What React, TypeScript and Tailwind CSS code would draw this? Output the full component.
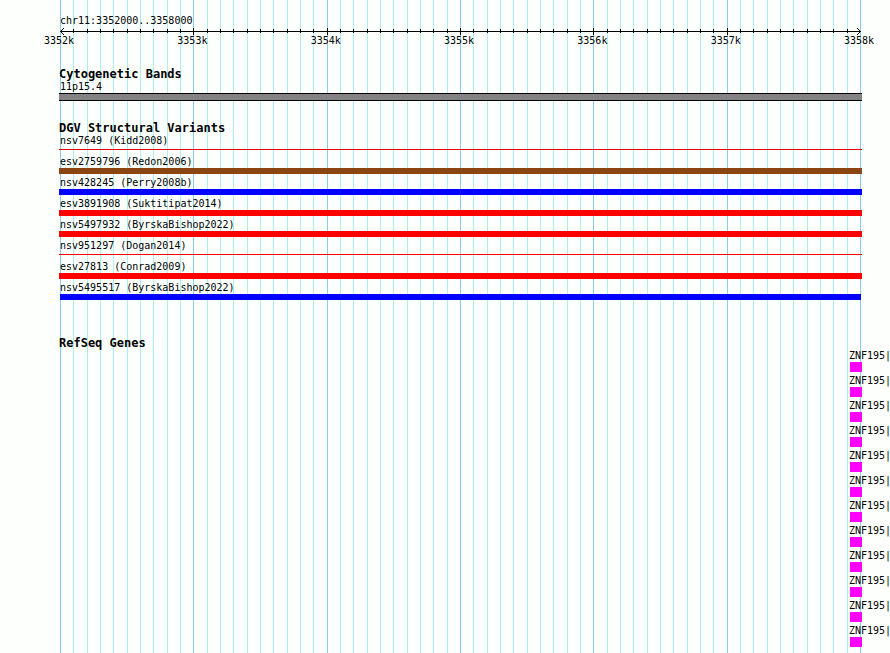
import * as React from "react";
import clsx from "clsx";

const majors = [0, 1, 2, 3, 4, 5];
const minors = [0, 1, 2, 3, 4, 5, 6, 7, 8, 9];
const rulerLabels = ["3352k", "3353k", "3354k", "3355k", "3356k", "3357k", "3358k"];

type Variant = {
    name: string;
    color: string;
    thin?: boolean;
    inset?: boolean;
};

const variants: Variant[] = [
    {name: "nsv7649 (Kidd2008)", color: "bg-[#e60012]", thin: true},
    {name: "esv2759796 (Redon2006)", color: "bg-[#8b4513]"},
    {name: "nsv428245 (Perry2008b)", color: "bg-[#0000ff]"},
    {name: "esv3891908 (Suktitipat2014)", color: "bg-[#ff0000]"},
    {name: "nsv5497932 (ByrskaBishop2022)", color: "bg-[#ff0000]"},
    {name: "nsv951297 (Dogan2014)", color: "bg-[#ff0000]", thin: true},
    {name: "esv27813 (Conrad2009)", color: "bg-[#ff0000]"},
    {name: "nsv5495517 (ByrskaBishop2022)", color: "bg-[#0000ff]", inset: true},
];

const genes = Array.from({length: 12}, () => "ZNF195|");

function GridLines() {
    return (
        <div className="absolute inset-0 pl-[60px] pr-[29px] flex" aria-hidden="true">
            {majors.map((major) => (
                <div key={major} className="flex-1 flex">
                    {minors.map((minor) => (
                        <div
                            key={minor}
                            className={clsx(
                                "flex-1 border-l",
                                minor === 0 ? "border-[#87ceeb]" : "border-[#afeeee]"
                            )}
                        />
                    ))}
                </div>
            ))}
            <div className="w-px bg-[#87ceeb]"/>
        </div>
    );
}

function Ruler() {
    return (
        <header className="pt-[14px]">
            <h1 className="pl-[60px] h-[14px]">chr11:3352000..3358000</h1>
            <div className="relative pl-[60px] pr-[30px] h-[7px] flex" aria-hidden="true">
                {majors.map((major) => (
                    <div key={major} className="flex-1 flex">
                        {minors.map((minor) => (
                            <div key={minor} className="flex-1">
                                {major + minor > 0 && (
                                    <div className={clsx("w-px bg-black", minor === 0 ? "h-[7px]" : "mt-px h-1")}/>
                                )}
                            </div>
                        ))}
                    </div>
                ))}
                <div className="absolute left-[60px] right-[29px] top-[3px] h-px bg-black"/>
                <svg className="absolute left-[60px] top-0" width="4" height="7" shapeRendering="crispEdges">
                    <path d="M0 3h1v1h-1zM1 2h1v1h-1zM2 1h1v1h-1zM3 0h1v1h-1zM1 4h1v1h-1zM2 5h1v1h-1zM3 6h1v1h-1z"/>
                </svg>
                <svg className="absolute right-[29px] top-0" width="4" height="7" shapeRendering="crispEdges">
                    <path d="M3 3h1v1h-1zM2 2h1v1h-1zM1 1h1v1h-1zM0 0h1v1h-1zM2 4h1v1h-1zM1 5h1v1h-1zM0 6h1v1h-1z"/>
                </svg>
            </div>
            <div className="pl-[44px] pr-[16px] flex justify-between h-[12px] leading-[12px]">
                {rulerLabels.map((label) => (
                    <span key={label} className="w-[30px]">{label}</span>
                ))}
            </div>
        </header>
    );
}

function TrackTitle({children}: { children: React.ReactNode }) {
    return <h2 className="text-[12px] leading-[14px] h-[14px] font-bold">{children}</h2>;
}

export default function App() {
    return (
        <main
            className="relative min-h-screen overflow-hidden bg-[#fdfffc] text-black text-[10px] leading-[14px] whitespace-nowrap font-['DejaVu_Sans_Mono','Liberation_Mono',monospace]"
        >
            <GridLines/>
            <div className="relative">
                <Ruler/>

                <section className="mt-5 ml-[59px] mr-[28px]">
                    <TrackTitle>Cytogenetic Bands</TrackTitle>
                    <p className="pl-px h-[12px] leading-[12px]">11p15.4</p>
                    <div className="h-2 border-y border-black bg-[#848284]"/>
                </section>

                <section className="mt-5 ml-[59px] mr-[28px]">
                    <TrackTitle>DGV Structural Variants</TrackTitle>
                    <ul>
                        {variants.map((variant) => (
                            <li key={variant.name} className="h-[21px]">
                                <p className="pl-px h-[12px] leading-[12px]">{variant.name}</p>
                                <div
                                    className={clsx(
                                        variant.color,
                                        variant.thin ? "mt-0.5 h-px" : "h-[6px]",
                                        variant.inset && "mx-px"
                                    )}
                                />
                            </li>
                        ))}
                    </ul>
                </section>

                <section className="mt-[33px] ml-[59px] mr-[28px]">
                    <TrackTitle>RefSeq Genes</TrackTitle>
                    <ul className="flex flex-col items-end">
                        {genes.map((gene, i) => (
                            <li key={i} className="w-[13px] h-[25px]">
                                <p className="h-[12px] leading-[12px]">{gene}</p>
                                <div className="ml-px h-[10px] bg-[#ff00ff]"/>
                            </li>
                        ))}
                    </ul>
                </section>
            </div>
        </main>
    );
}
